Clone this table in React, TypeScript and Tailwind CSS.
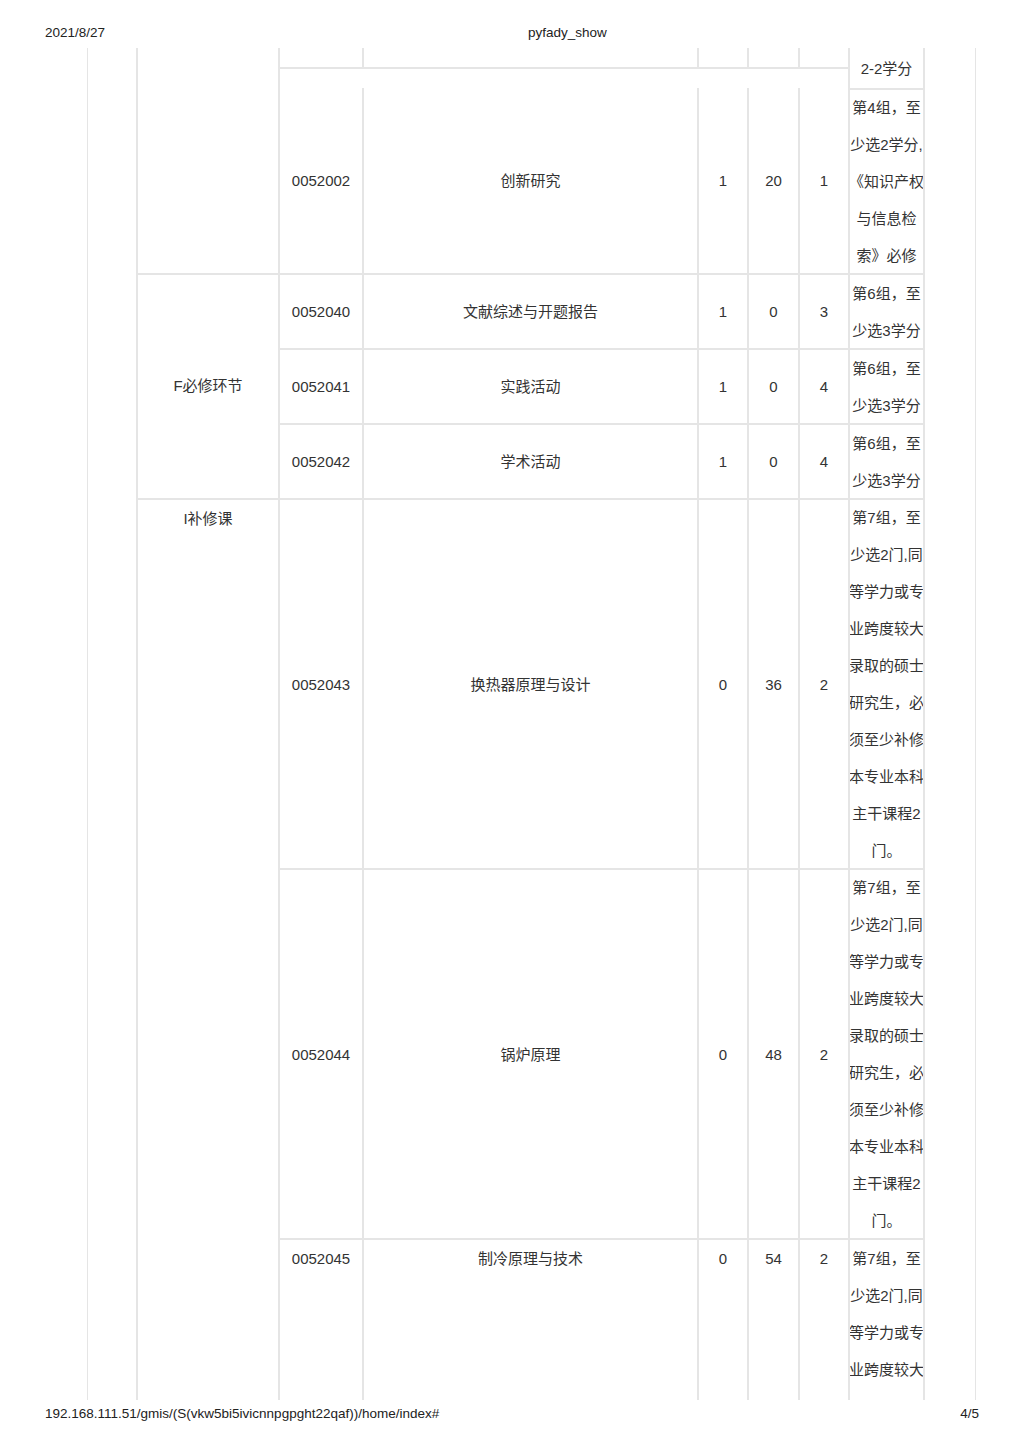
// Printed page 4/5 of the training-plan table (pyfady_show).
// Cut off at top and bottom like the print, so some rows start or end mid-cell.

const FONT = "font-['Liberation_Sans','Noto_Sans_CJK_SC',sans-serif]";
const line = "border-[#e5e5e5]";

const NOTE_6 = ["第6组，至", "少选3学分"];
const NOTE_7 = [
  "第7组，至", "少选2门,同", "等学力或专", "业跨度较大", "录取的硕士",
  "研究生，必", "须至少补修", "本专业本科", "主干课程2", "门。",
];

type Row = {
  code: string;
  name: string;
  a: string;
  b: string;
  c: string;
  note: string[];
  top?: boolean; // row cut by the page bottom: text sits at the top
  first?: boolean; // first row under a horizontal rule
};

const F_ROWS: Row[] = [
  { code: "0052040", name: "文献综述与开题报告", a: "1", b: "0", c: "3", note: NOTE_6 },
  { code: "0052041", name: "实践活动", a: "1", b: "0", c: "4", note: NOTE_6 },
  { code: "0052042", name: "学术活动", a: "1", b: "0", c: "4", note: NOTE_6 },
];

const I_ROWS: Row[] = [
  { code: "0052043", name: "换热器原理与设计", a: "0", b: "36", c: "2", note: NOTE_7 },
  { code: "0052044", name: "锅炉原理", a: "0", b: "48", c: "2", note: NOTE_7 },
  { code: "0052045", name: "制冷原理与技术", a: "0", b: "54", c: "2", note: NOTE_7.slice(0, 4), top: true },
];

function CourseRow({ row, ruled = true }: { row: Row; ruled?: boolean }) {
  const t = ruled ? "border-t-2" : "";
  const align = row.top ? "items-start" : "items-center";
  const cell = `flex ${align} justify-center border-l-2 ${t} ${line} leading-[37px] overflow-hidden`;
  return (
    <>
      <div className={cell}>{row.code}</div>
      <div className={cell}>{row.name}</div>
      <div className={cell}>{row.a}</div>
      <div className={cell}>{row.b}</div>
      <div className={cell}>{row.c}</div>
      <div
        className={`flex flex-col ${row.top ? "justify-start" : "justify-center"} items-center border-x-2 border-t-2 ${line} overflow-hidden`}
      >
        {row.note.map((l, i) => (
          <span key={i} className="whitespace-nowrap leading-[37px]">
            {l}
          </span>
        ))}
      </div>
    </>
  );
}

export default function App() {
  return (
    <div className={`w-[1024px] h-[1448px] bg-white text-[#333] ${FONT}`}>
      {/* print header */}
      <div className="flex h-[48px] pt-[24px] pl-[45px] text-[13.5px] leading-[18px] text-[#222]">
        <span className="w-[483px]">2021/8/27</span>
        <span>pyfady_show</span>
      </div>

      {/* page frame */}
      <div className={`ml-[87px] w-[889px] h-[1352px] border-x ${line} pl-[48px] overflow-hidden`}>
        <div className="grid grid-cols-[142px_84px_335px_50px_51px_50px_77px] grid-rows-[19px_21px_185px_75px_75px_75px_370px_370px_162px] text-[15px]">
          {/* rows carried over from the previous page */}
          <div className={`row-span-3 border-l-2 ${line}`} />
          <div className={`border-l-2 ${line}`} />
          <div className={`border-l-2 ${line}`} />
          <div className={`border-l-2 ${line}`} />
          <div className={`border-l-2 ${line}`} />
          <div className={`border-l-2 ${line}`} />
          <div className={`row-span-2 flex items-center justify-center border-x-2 ${line} leading-[37px] whitespace-nowrap`}>
            2-2学分
          </div>
          <div className={`col-span-5 border-l-2 border-t-2 ${line}`} />

          <CourseRow
            row={{
              code: "0052002",
              name: "创新研究",
              a: "1",
              b: "20",
              c: "1",
              note: ["第4组，至", "少选2学分,", "《知识产权", "与信息检", "索》必修"],
            }}
            ruled={false}
          />

          {/* F 必修环节 */}
          <div className={`row-span-3 flex items-center justify-center border-l-2 border-t-2 ${line}`}>
            F必修环节
          </div>
          {F_ROWS.map((r) => (
            <CourseRow key={r.code} row={r} />
          ))}

          {/* I 补修课 */}
          <div className={`row-span-3 flex justify-center border-l-2 border-t-2 ${line} leading-[37px]`}>
            I补修课
          </div>
          {I_ROWS.map((r) => (
            <CourseRow key={r.code} row={r} />
          ))}
        </div>
      </div>

      {/* print footer */}
      <div className="flex justify-between px-[45px] pt-[5px] text-[13.5px] leading-[18px] text-[#222]">
        <span>192.168.111.51/gmis/(S(vkw5bi5ivicnnpgpght22qaf))/home/index#</span>
        <span>4/5</span>
      </div>
    </div>
  );
}
